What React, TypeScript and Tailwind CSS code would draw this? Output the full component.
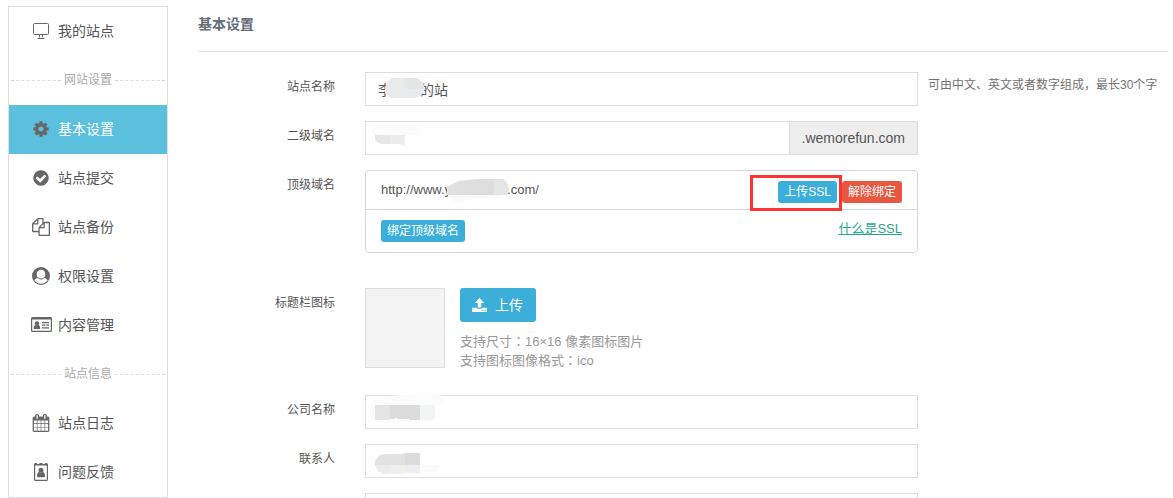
import { useState } from "react";
import type { ReactNode } from "react";

interface NavItem {
  id: string;
  label: string;
  icon: ReactNode;
}

const COG =
  "M1152 896q0-106-75-181t-181-75-181 75-75 181 75 181 181 75 181-75 75-181zm512-109v222q0 12-8 23t-20 13l-185 28q-19 54-39 91 35 50 107 138 10 12 10 25t-9 23q-27 37-99 108t-94 71q-12 0-26-9l-138-108q-44 23-91 38-16 136-29 186-7 28-36 28h-222q-14 0-24.5-8.5t-11.5-21.5l-28-184q-49-16-90-37l-141 107q-10 9-25 9-14 0-25-11-126-114-165-168-7-10-7-23 0-12 8-23 15-21 51-66.5t54-70.5q-27-50-41-99l-183-27q-13-2-21-12.5t-8-23.5v-222q0-12 8-23t19-13l186-28q14-46 39-92-40-57-107-138-10-12-10-24 0-10 9-23 26-36 98.5-107.5t94.5-71.5q13 0 26 10l138 107q44-23 91-38 16-136 29-186 7-28 36-28h222q14 0 24.5 8.5t11.5 21.5l28 184q49 16 90 37l142-107q9-9 24-9 13 0 25 10 129 119 165 170 7 8 7 22 0 12-8 23-15 21-51 66.5t-54 70.5q26 50 41 98l183 28q13 2 21 12.5t8 23.5z";
const CHECK_CIRCLE =
  "M1412 734q0-28-18-46l-91-90q-19-19-45-19t-45 19l-408 407-226-226q-19-19-45-19t-45 19l-91 90q-18 18-18 46 0 27 18 45l362 362q19 19 45 19 27 0 46-19l543-543q18-18 18-45zm252 162q0 209-103 385.5t-279.5 279.5-385.5 103-385.5-103-279.5-279.5-103-385.5 103-385.5 279.5-279.5 385.5-103 385.5 103 279.5 279.5 103 385.5z";
const FILES =
  "M1696 384q40 0 68 28t28 68v1216q0 40-28 68t-68 28h-960q-40 0-68-28t-28-68v-288h-544q-40 0-68-28t-28-68v-672q0-40 20-88t48-76l408-408q28-28 76-48t88-20h416q40 0 68 28t28 68v328q68-40 128-40h416zm-544 213l-299 299h299v-299zm-640-384l-299 299h299v-299zm196 647l316-316v-416h-384v416q0 40-28 68t-68 28h-416v640h512v-256q0-40 20-88t48-76zm956 804v-1152h-384v416q0 40-28 68t-68 28h-416v640h896z";
const CALENDAR =
  "M192 1664h288v-288h-288v288zm352 0h320v-288h-320v288zm-352-352h288v-320h-288v320zm352 0h320v-320h-320v320zm-352-384h288v-288h-288v288zm736 736h320v-288h-320v288zm-384-736h320v-288h-320v288zm768 736h288v-288h-288v288zm-384-352h320v-320h-320v320zm-352-864v-288q0-13-9.5-22.5t-22.5-9.5h-64q-13 0-22.5 9.5t-9.5 22.5v288q0 13 9.5 22.5t22.5 9.5h64q13 0 22.5-9.5t9.5-22.5zm736 864h288v-320h-288v320zm-384-384h320v-288h-320v288zm384 0h288v-288h-288v288zm32-480v-288q0-13-9.5-22.5t-22.5-9.5h-64q-13 0-22.5 9.5t-9.5 22.5v288q0 13 9.5 22.5t22.5 9.5h64q13 0 22.5-9.5t9.5-22.5zm384-64v1280q0 52-38 90t-90 38h-1408q-52 0-90-38t-38-90v-1280q0-52 38-90t90-38h128v-96q0-66 47-113t113-47h64q66 0 113 47t47 113v96h384v-96q0-66 47-113t113-47h64q66 0 113 47t47 113v96h128q52 0 90 38t38 90z";

function Glyph({ d }: { d: string }) {
  return (
    <svg viewBox="0 0 1792 1792" className="size-[18px]" fill="currentColor" aria-hidden="true">
      <path d={d} />
    </svg>
  );
}

const monitorIcon = (
  <svg viewBox="0 0 16 16" className="size-4" fill="none" stroke="currentColor" aria-hidden="true">
    <rect x="0.5" y="0.5" width="15" height="11" rx="1" />
    <path d="M6.5 12v2.5M9.5 12v2.5M4.5 15.5h7" />
  </svg>
);

const userCircleIcon = (
  <svg viewBox="0 0 18 18" className="size-[18px]" aria-hidden="true">
    <circle cx="9" cy="9" r="9" fill="currentColor" />
    <path
      d="M9 2.800a4.300 4.300 0 0 0-4.300 4.400c0 1.700.6 3 1.500 3.800C4.300 11.300 3 12.200 2.400 13.300a8 8 0 0 0 13.200 0c-.6-1.100-1.900-2-3.800-2.300.9-.8 1.500-2.100 1.500-3.800A4.300 4.300 0 0 0 9 2.800z"
      fill="white"
    />
    <path d="M6.200 10.900c1.700 1.500 3.900 1.500 5.600 0" fill="none" stroke="currentColor" strokeWidth="1" />
  </svg>
);

const addressCardIcon = (
  <svg viewBox="0 0 21 16" className="h-4 w-[21px]" aria-hidden="true">
    <path
      fill="currentColor"
      fillRule="evenodd"
      d="M1.500 0h18A1.500 1.500 0 0 1 21 1.500v12a1.500 1.500 0 0 1-1.500 1.500h-18A1.500 1.500 0 0 1 0 13.500v-12A1.500 1.500 0 0 1 1.500 0zM1.200 2.500v11.300h18.600V2.500z"
    />
    <circle cx="6" cy="6.500" r="2.200" fill="currentColor" />
    <path fill="currentColor" d="M2.700 12c0-2.400.8-4 2-4 .8.600 1.800.6 2.600 0 1.200 0 2 1.600 2 4zM11 5h7v1.200h-7zM11 7.600h3.500v1.200H11zM15.300 7.600H18v1.200h-2.700zM11 10.300h7v1.200h-7z" />
  </svg>
);

const badgeIcon = (
  <svg viewBox="0 0 14 18" className="h-[18px] w-[14px]" aria-hidden="true">
    <path
      fill="currentColor"
      fillRule="evenodd"
      d="M1.500 0H3v1h2.500V0h3v1H11V0h1.500A1.500 1.500 0 0 1 14 1.500v15a1.500 1.500 0 0 1-1.500 1.500h-11A1.500 1.500 0 0 1 0 16.500v-15A1.500 1.500 0 0 1 1.500 0zM1.200 2.500v14.300h11.600V2.500z"
    />
    <circle cx="7" cy="7.300" r="2.500" fill="currentColor" />
    <path fill="currentColor" d="M3 13.500c0-2.700.9-4.400 2.200-4.400 1 .7 2.600.7 3.600 0 1.300 0 2.200 1.700 2.200 4.400-.2.400-.5.700-.9.700H3.900c-.4 0-.7-.3-.9-.7z" />
  </svg>
);

const uploadIcon = (
  <svg viewBox="0 0 14 13" className="h-[14px] w-[15px]" fill="currentColor" aria-hidden="true">
    <path d="M7 0l4.300 4.600H8.600v4.200H5.400V4.600H2.700z" />
    <path
      fillRule="evenodd"
      d="M.5 9h3.900c.2.700.7 1 1.300 1h2.600c.6 0 1.100-.3 1.300-1h3.900c.3 0 .5.200.5.500v3c0 .3-.2.500-.5.500H.5a.5.500 0 0 1-.5-.5v-3C0 9.200.2 9 .5 9zm9.200 2v1h1v-1zm2 0v1h1v-1z"
    />
  </svg>
);

const siteNav: NavItem[] = [
  { id: "basic", label: "基本设置", icon: <Glyph d={COG} /> },
  { id: "submit", label: "站点提交", icon: <Glyph d={CHECK_CIRCLE} /> },
  { id: "backup", label: "站点备份", icon: <Glyph d={FILES} /> },
  { id: "auth", label: "权限设置", icon: userCircleIcon },
  { id: "content", label: "内容管理", icon: addressCardIcon },
];

const infoNav: NavItem[] = [
  { id: "log", label: "站点日志", icon: <Glyph d={CALENDAR} /> },
  { id: "feedback", label: "问题反馈", icon: badgeIcon },
];

const inputClass =
  "block h-[34px] w-full min-w-0 border border-[#dddddd] bg-white px-3 text-sm text-[#555555] focus:outline-none focus:border-[#5bc0de]";
const smallButton = "h-[22px] rounded-[3px] px-1.5 text-xs text-white cursor-pointer";

function NavLink({ item, active, onSelect }: { item: NavItem; active: boolean; onSelect: (id: string) => void }) {
  return (
    <a
      href={`#${item.id}`}
      onClick={() => onSelect(item.id)}
      className={`flex h-[49px] items-center gap-1.5 pb-0.5 pl-[21px] text-sm ${active ? "bg-[#5bc0de]" : ""}`}
    >
      <span className="flex w-[22px] justify-center text-[#666666]">{item.icon}</span>
      <span className={active ? "text-white" : "text-[#555555]"}>{item.label}</span>
    </a>
  );
}

function NavDivider({ children }: { children: ReactNode }) {
  return (
    <div className="flex h-[49px] items-center px-0.5 text-xs text-[#aaaaaa]">
      <span className="flex-1 border-t border-dashed border-[#dddddd]" />
      <span className="px-[3px] pb-0.5">{children}</span>
      <span className="flex-1 border-t border-dashed border-[#dddddd]" />
    </div>
  );
}

function Row({ label, htmlFor, help, children }: { label?: string; htmlFor?: string; help?: string; children: ReactNode }) {
  const labelClass = "w-[137px] shrink-0 pt-[7px] text-right text-xs text-[#555555]";
  return (
    <div className="flex">
      {htmlFor ? (
        <label htmlFor={htmlFor} className={labelClass}>{label}</label>
      ) : (
        <div className={labelClass}>{label}</div>
      )}
      <div className="relative ml-[30px] min-w-0 flex-1">{children}</div>
      <div className="ml-2.5 w-60 shrink-0 pt-[5px] text-xs text-[#737373]">{help}</div>
    </div>
  );
}

export default function App() {
  const [current, setCurrent] = useState("basic");

  return (
    <div className="flex h-screen overflow-hidden bg-white pl-2 pr-[5px] pt-1.5 font-['Liberation_Sans','Noto_Sans_CJK_SC',sans-serif]">
      <nav className="w-40 shrink-0 self-start border border-[#dddddd]">
        <NavLink item={{ id: "sites", label: "我的站点", icon: monitorIcon }} active={current === "sites"} onSelect={setCurrent} />
        <NavDivider>网站设置</NavDivider>
        {siteNav.map((item) => (
          <NavLink key={item.id} item={item} active={current === item.id} onSelect={setCurrent} />
        ))}
        <NavDivider>站点信息</NavDivider>
        {infoNav.map((item) => (
          <NavLink key={item.id} item={item} active={current === item.id} onSelect={setCurrent} />
        ))}
      </nav>

      <main className="ml-[30px] min-w-0 flex-1">
        <h1 className="border-b border-[#e5e5e5] pb-[17px] pt-2 text-sm font-bold text-[#656d78]">基本设置</h1>

        <form className="mt-5 flex flex-col" onSubmit={(e) => e.preventDefault()}>
          <div className="flex flex-col gap-[15px]">
            <Row label="站点名称" htmlFor="site-name" help="可由中文、英文或者数字组成，最长30个字">
              <input id="site-name" type="text" defaultValue="李　　的站" className={inputClass} />
              <svg className="pointer-events-none absolute left-5 top-[5px] h-[22px] w-10" viewBox="0 0 40 22" aria-hidden="true">
                <path d="M7 1h25l6 5 2 6-4 7-6 2H6l-6-5v-6l3-6z" fill="#e9eaed" />
                <path d="M20 1h12l6 5 1 6H20z" fill="#e5e5e5" />
              </svg>
            </Row>

            <Row label="二级域名" htmlFor="sub-domain">
              <div className="flex">
                <input id="sub-domain" type="text" className={inputClass} />
                <span className="-ml-px flex shrink-0 items-center border border-[#dddddd] bg-[#eeeeee] px-3 text-sm text-[#555555]">
                  .wemorefun.com
                </span>
              </div>
              <svg className="pointer-events-none absolute left-2 top-[3px] h-[22px] w-12" viewBox="0 0 48 22" aria-hidden="true">
                <path d="M4 0h36l6 4 1 7H0V6z" fill="#fbfbfb" />
                <path d="M2 11h15v9H8l-4-2-2-3z" fill="#e6e6e6" />
                <path d="M17 11h15v10h-4v-1H17z" fill="#ececec" />
              </svg>
            </Row>

            <Row label="顶级域名">
              <div className="rounded border border-[#d5d8e0] text-[13px] text-[#555555]">
                <div className="flex h-[39px] items-center border-b border-[#d5d8e0] px-[15px]">
                  <span>http://www.y</span>
                  <span className="w-14" />
                  <span>.com/</span>
                  <div className="ml-auto flex gap-[5px] pt-1">
                    <button type="button" className={`${smallButton} bg-[#3bafda]`}>上传SSL</button>
                    <button type="button" className={`${smallButton} bg-[#e9573f]`}>解除绑定</button>
                  </div>
                </div>
                <div className="flex h-[42px] items-center justify-between px-[15px]">
                  <button type="button" className={`${smallButton} bg-[#3bafda]`}>绑定顶级域名</button>
                  <a href="#ssl" className="pb-1 text-[#26a98b] underline">什么是SSL</a>
                </div>
              </div>
              <svg className="pointer-events-none absolute left-[82px] top-[9px] h-6 w-[62px]" viewBox="0 0 62 24" aria-hidden="true">
                <path d="M1 15h58l-8 4H30l-16 4-9-1-4-4z" fill="#fafafa" />
                <path d="M0 16V9l3-3 9-4 17-2h27l4 4 2 7-2 5z" fill="#e0e0e0" />
                <path d="M17 2l12-1h18v15H17z" fill="#dddddd" />
                <path d="M47 1h8l4 3 2 7-1 5H47z" fill="#e6e6e6" />
              </svg>
              <div className="pointer-events-none absolute right-[76px] top-[5px] h-9 w-[92px] border-3 border-[#ff3333]" />
            </Row>
          </div>

          <div className="mb-[25px] mt-[35px]">
            <Row label="标题栏图标">
              <div className="flex gap-[15px]">
                <div className="size-20 shrink-0 border border-[#dddddd] bg-[#f3f3f3]" />
                <div>
                  <button
                    type="button"
                    className="flex h-[34px] cursor-pointer items-center gap-2 rounded-[3px] bg-[#3bafda] pl-3 pr-[13px] text-sm text-white"
                  >
                    {uploadIcon}
                    <span>上传</span>
                  </button>
                  <p className="mt-2.5 text-[13px] leading-[19px] text-[#999999]">
                    支持尺寸<span className="font-['Noto_Sans_CJK_JP',sans-serif] leading-none">：</span>16×16 像素图标图片
                    <br />
                    支持图标图像格式<span className="font-['Noto_Sans_CJK_JP',sans-serif] leading-none">：</span>ico
                  </p>
                </div>
              </div>
            </Row>
          </div>

          <div className="flex flex-col gap-[15px]">
            <Row label="公司名称" htmlFor="company">
              <input id="company" type="text" className={inputClass} />
              <svg className="pointer-events-none absolute -top-1 left-1 h-8 w-[76px]" viewBox="0 0 76 32" aria-hidden="true">
                <path d="M4 9l16-4 28-2V2l9-2 4 2 9 1 4 4 1 7H66v12l-4 5H10l-6-3-3-9z" fill="#fcfcfc" />
                <path d="M6 14h15v15H6z" fill="#e4e4e4" />
                <path d="M21 14h30v15H41l-1-1H29l-1-1h-2v1h-5z" fill="#dbdbdb" />
                <path d="M51 14h15v13l-2 2H51z" fill="#f3f5f4" />
              </svg>
            </Row>
            <Row label="联系人" htmlFor="contact">
              <input id="contact" type="text" className={inputClass} />
              <svg className="pointer-events-none absolute left-2.5 top-[9px] h-[21px] w-[66px]" viewBox="0 0 66 21" aria-hidden="true">
                <path d="M0 12V8l5-6 6-1h16l3-1v12z" fill="#e2e2e2" />
                <path d="M30 0h15v12H30z" fill="#dcdcdc" />
                <path d="M0 12h15v9H8l-5-3z" fill="#ececee" />
                <path d="M15 12h15v8l-3 1H15z" fill="#f0f0ed" />
                <path d="M30 12h15v8H30z" fill="#eeeef1" />
                <path d="M45 12h21l-4 7H45z" fill="#fbfbfb" />
              </svg>
            </Row>
            <Row>
              <input type="text" aria-label="联系电话" className={inputClass} />
            </Row>
          </div>
        </form>
      </main>
    </div>
  );
}
